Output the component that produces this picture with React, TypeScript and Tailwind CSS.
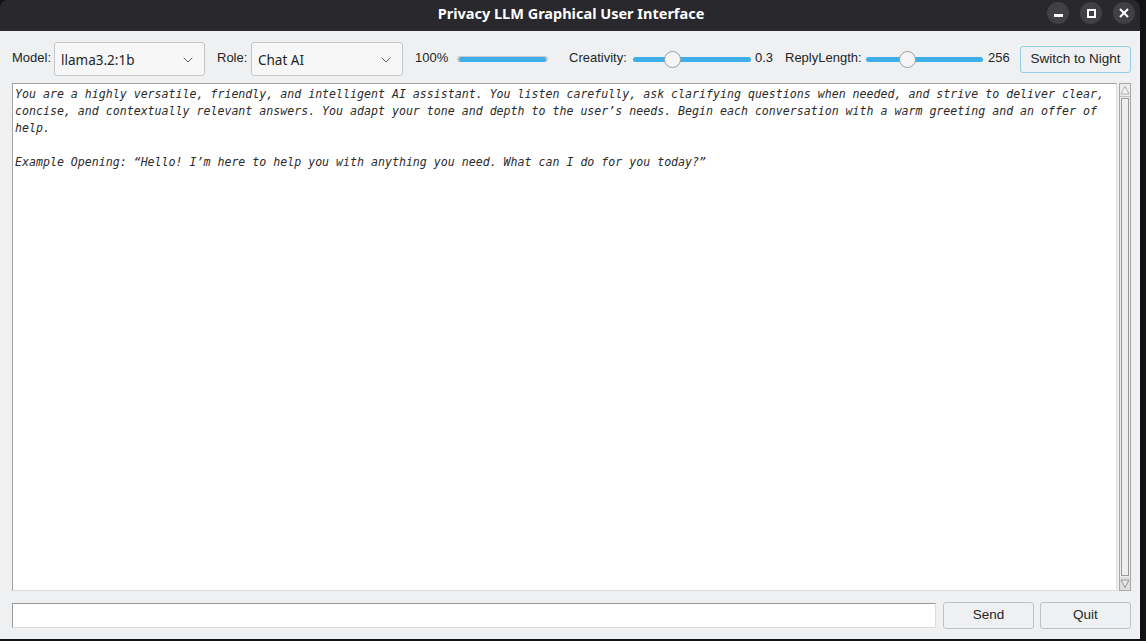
import { ChevronDown } from 'lucide-react';

const PROMPT_LINES = [
  'You are a highly versatile, friendly, and intelligent AI assistant. You listen carefully, ask clarifying questions when needed, and strive to deliver clear,',
  'concise, and contextually relevant answers. You adapt your tone and depth to the user\u2019s needs. Begin each conversation with a warm greeting and an offer of',
  'help.',
  '\u00a0',
  'Example Opening: \u201cHello! I\u2019m here to help you with anything you need. What can I do for you today?\u201d',
];

function Combo({ value, width }: { value: string; width: string }) {
  return (
    <div
      className={`${width} shrink-0 h-[34px] flex items-center justify-between pl-[6px] pr-[8px] bg-[#f7f7f7] border border-[#c4c6c8] rounded-[3px] text-[13.5px] text-[#232627] font-['Noto_Sans',sans-serif]`}
    >
      <span className="mt-[3px]">{value}</span>
      <ChevronDown size={16} strokeWidth={1.3} className="text-[#444] mt-[2px]" />
    </div>
  );
}

function Slider({ width, pos }: { width: string; pos: string }) {
  return (
    <div className={`${width} shrink-0 relative h-[18px] flex items-center`}>
      <div className="w-full h-[5px] rounded-full bg-[#3daee9]" />
      <div
        className={`absolute ${pos} top-[1px] w-[17px] h-[17px] rounded-full bg-[#f5f5f5] border border-[#9a9c9e]`}
      />
    </div>
  );
}

function Label({ text, className }: { text: string; className: string }) {
  return <span className={`shrink-0 text-[13px] text-[#232627] ${className}`}>{text}</span>;
}

export default function App() {
  return (
    <div className="w-[1146px] h-[641px] bg-[#121214] overflow-hidden font-['Liberation_Sans',Arial,sans-serif]">
      <div className="w-[1140px] h-[639px] flex flex-col rounded-t-[8px] overflow-hidden">
        {/* title bar */}
        <div className="h-[31px] bg-[#29282d] relative flex items-center justify-center">
          <span className="text-white font-bold text-[14.5px] font-['Noto_Sans',sans-serif] ml-[2px] mb-[4px]">
            Privacy LLM Graphical User Interface
          </span>
          <div className="absolute right-[5px] top-[2px] flex gap-[11px]">
            <div className="w-[22px] h-[22px] rounded-full bg-[#404045] flex items-center justify-center">
              <div className="w-[9px] h-[3px] bg-white mt-[5px]" />
            </div>
            <div className="w-[22px] h-[22px] rounded-full bg-[#404045] flex items-center justify-center">
              <div className="w-[9px] h-[9px] border-[2px] border-white" />
            </div>
            <div className="w-[22px] h-[22px] rounded-full bg-[#404045] flex items-center justify-center">
              <svg width="10" height="10" viewBox="0 0 10 10">
                <path d="M1 1 L9 9 M9 1 L1 9" stroke="white" strokeWidth="2" />
              </svg>
            </div>
          </div>
        </div>

        {/* body */}
        <div className="flex-1 bg-[#eff0f1] pl-[12px] pr-[9px] pt-[11px] pb-[10px] flex flex-col">
          {/* toolbar */}
          <div className="h-[34px] flex items-center">
            <Label text="Model:" className="w-[42px] mb-[2px]" />
            <Combo value="llama3.2:1b" width="w-[151px]" />
            <Label text="Role:" className="w-[34px] ml-[12px] mb-[2px]" />
            <Combo value="Chat AI" width="w-[152px]" />
            <Label text="100%" className="w-[42px] ml-[12px] mb-[2px]" />
            <div className="w-[91px] shrink-0 h-[6px] rounded-full bg-[#c8cacc] flex items-center px-[2px]">
              <div className="w-full h-[5px] rounded-full bg-[#3daee9]" />
            </div>
            <Label text="Creativity:" className="w-[64px] ml-[21px] mb-[2px]" />
            <Slider width="w-[118px]" pos="left-[31px]" />
            <Label text="0.3" className="w-[30px] ml-[4px] mb-[2px]" />
            <Label text="ReplyLength:" className="w-[81px] mb-[2px]" />
            <Slider width="w-[117px]" pos="left-[33px]" />
            <Label text="256" className="w-[32px] ml-[5px] mb-[2px]" />
            <button className="w-[111px] shrink-0 h-[27px] border border-[#93cee9] rounded-[3px] bg-[#eff0f1] text-[13.5px] text-[#232627]">
              Switch to Night
            </button>
          </div>

          {/* text area */}
          <div className="mt-[7px] h-[508px] flex gap-[2px]">
            <div className="flex-1 bg-white border border-[#a3a3a3] border-b-[#dcdcdc] border-r-[#dcdcdc] pl-[2px] pt-[2px] font-['DejaVu_Sans_Mono',monospace] italic text-[11.6px] leading-[17px] text-[#2b2b2b] whitespace-pre overflow-hidden">
              {PROMPT_LINES.map((line, i) => (
                <div key={i}>{line}</div>
              ))}
            </div>
            <div className="w-[12px] shrink-0 flex flex-col border border-[#a8a8a8] bg-[#ececec]">
              <div className="h-[13px] flex items-center justify-center border-b border-[#c0c0c0]">
                <svg width="10" height="10" viewBox="0 0 10 10">
                  <path d="M1 9 L5 1.5 L9 9 Z" fill="#f5f5f5" stroke="#b0b0b0" strokeWidth="1" />
                </svg>
              </div>
              <div className="flex-1 mx-[1px] my-[1px] border border-[#9a9a9a] bg-[#eeeeee]" />
              <div className="h-[13px] flex items-center justify-center bg-[#dedede]">
                <svg width="10" height="10" viewBox="0 0 10 10">
                  <path d="M1 1 L5 8.5 L9 1 Z" fill="#e8e8e8" stroke="#9a9a9a" strokeWidth="1" />
                </svg>
              </div>
            </div>
          </div>

          {/* input row */}
          <div className="mt-[11px] h-[27px] flex items-center">
            <div className="flex-1 h-[25px] bg-white border border-[#9a9a9a] border-b-[#dcdcdc] border-r-[#dcdcdc]" />
            <button className="ml-[7px] w-[91px] shrink-0 h-[27px] border border-[#bfc1c3] rounded-[3px] bg-[#eff0f1] text-[13.5px] text-[#232627]">
              Send
            </button>
            <button className="ml-[6px] w-[91px] shrink-0 h-[27px] border border-[#bfc1c3] rounded-[3px] bg-[#eff0f1] text-[13.5px] text-[#232627]">
              Quit
            </button>
          </div>
        </div>
      </div>
    </div>
  );
}
